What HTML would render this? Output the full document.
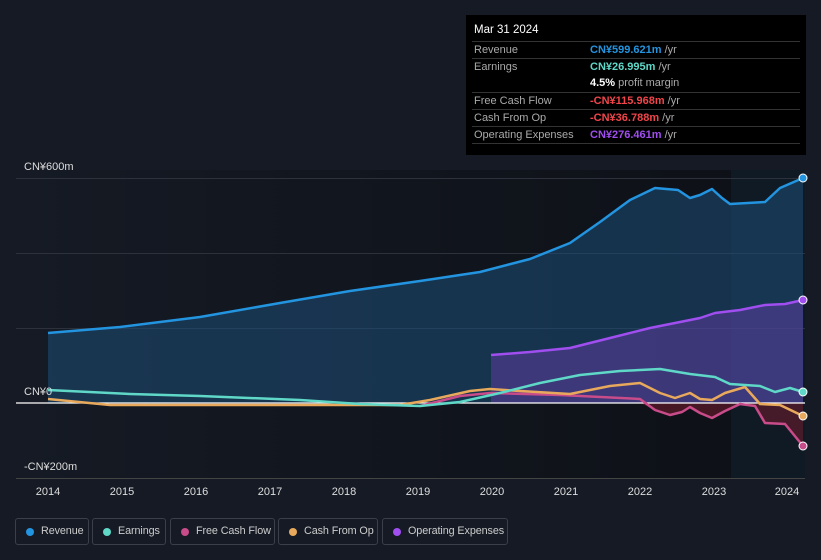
<!DOCTYPE html>
<html style="height:560px;overflow:hidden"><head><style>
body{margin:0;width:821px;height:560px;background:#151a24;font-family:"Liberation Sans",sans-serif;overflow:hidden;position:relative}
.tip{position:absolute;left:466px;top:15px;width:340px;height:140px;background:#000;color:#aaa;font-size:11px}
.tip .h{position:absolute;left:8px;top:9px;color:#fff;font-size:11.5px}
.row{position:absolute;left:6px;width:328px;border-top:1px solid #333;height:16px;white-space:nowrap}
.row span{position:absolute;top:2px}
.row .l{left:2px}.row .v{left:118px}
.leg{position:absolute;top:518px;height:27px;border:1px solid #3a3f4a;border-radius:3px;color:#ccc;font-size:10.8px;letter-spacing:-0.1px;line-height:25px;box-sizing:border-box;white-space:nowrap}
.leg i{position:absolute;left:10px;top:9px;width:8px;height:8px;border-radius:50%}
.leg b{font-weight:normal;position:absolute;left:25px;top:0}
</style></head><body>
<svg width="821" height="560" style="position:absolute;left:0;top:0">
<defs><linearGradient id="bg" x1="0" x2="1"><stop offset="0" stop-color="#151a24"/><stop offset="1" stop-color="#0d1016"/></linearGradient></defs>
<rect x="16" y="170" width="789" height="308" fill="url(#bg)"/>
<rect x="731" y="170" width="74" height="308" fill="#0f1a24"/>
<g stroke="#2c313b" stroke-width="1"><line x1="16" y1="178.5" x2="805" y2="178.5"/><line x1="16" y1="253.5" x2="805" y2="253.5"/><line x1="16" y1="328.5" x2="805" y2="328.5"/><line x1="16" y1="478.5" x2="805" y2="478.5" stroke="#444"/></g>
<path d="M48,333 L120,327 L200,317 L280,303 L350,291 L420,281 L480,272 L530,259 L570,243 L600,222 L630,200 L655,188 L678,190 L690,198 L700,195 L712,189 L722,198 L730,204 L765,202 L780,188 L803,178 L803,403 L48,403Z" fill="#1e4f78" fill-opacity="0.55"/>
<path d="M491,355 L530,352 L570,348 L610,338 L650,328 L680,322 L700,318 L715,313 L740,310 L765,305 L785,304 L803,300 L803,403 L491,403Z" fill="#6a3fb0" fill-opacity="0.45"/>
<path d="M640,403 L655,410 L670,415 L682,412 L690,407 L700,413 L712,418 L725,411 L740,404 L755,406 L765,423 L785,424 L803,446 L803,403Z" fill="#6a1d2d" fill-opacity="0.6"/>
<line x1="16" y1="403" x2="805" y2="403" stroke="#fff" stroke-width="1.2"/>
<g fill="none" stroke-width="2.5" stroke-linejoin="round">
<path d="M48,333 L120,327 L200,317 L280,303 L350,291 L420,281 L480,272 L530,259 L570,243 L600,222 L630,200 L655,188 L678,190 L690,198 L700,195 L712,189 L722,198 L730,204 L765,202 L780,188 L803,178" stroke="#2394e0"/>
<path d="M491,355 L530,352 L570,348 L610,338 L650,328 L680,322 L700,318 L715,313 L740,310 L765,305 L785,304 L803,300" stroke="#a04ef0"/>
<path d="M420,406 L460,396 L490,393 L560,395 L640,399 L655,410 L670,415 L682,412 L690,407 L700,413 L712,418 L725,411 L740,404 L755,406 L765,423 L785,424 L803,446" stroke="#c84b8a"/>
<path d="M48,399 L110,405 L400,405 L430,400 L470,391 L490,389 L520,391 L570,394 L610,386 L640,383 L660,393 L675,398 L690,393 L700,399 L712,400 L725,393 L745,387 L760,404 L780,405 L803,416" stroke="#e8a95c"/>
<path d="M48,390 L130,394 L200,396 L300,400 L360,404 L420,406 L460,402 L500,393 L540,383 L580,375 L620,371 L660,369 L690,374 L715,377 L730,384 L760,386 L775,392 L790,388 L803,392" stroke="#5fd8c8"/>
</g>
<g stroke="#fff" stroke-width="1"><circle cx="803" cy="178" r="4" fill="#2394e0"/><circle cx="803" cy="300" r="4" fill="#a04ef0"/><circle cx="803" cy="392" r="4" fill="#5fd8c8"/><circle cx="803" cy="416" r="4" fill="#e8a95c"/><circle cx="803" cy="446" r="4" fill="#c84b8a"/></g>
<g fill="#ddd" font-size="11" font-family="Liberation Sans"><text x="24" y="170">CN¥600m</text><text x="24" y="395">CN¥0</text><text x="24" y="470">-CN¥200m</text></g>
<g fill="#ddd" font-size="11" font-family="Liberation Sans" text-anchor="middle"><text x="48" y="495">2014</text><text x="122" y="495">2015</text><text x="196" y="495">2016</text><text x="270" y="495">2017</text><text x="344" y="495">2018</text><text x="418" y="495">2019</text><text x="492" y="495">2020</text><text x="566" y="495">2021</text><text x="640" y="495">2022</text><text x="714" y="495">2023</text><text x="787" y="495">2024</text></g>
</svg>
<div class="tip"><div class="h">Mar 31 2024</div>
<div class="row" style="top:26px"><span class="l">Revenue</span><span class="v"><b style="color:#2394e0">CN¥599.621m</b> /yr</span></div>
<div class="row" style="top:43px"><span class="l">Earnings</span><span class="v"><b style="color:#5fd8c8">CN¥26.995m</b> /yr</span></div>
<div class="row" style="top:60px;border:0"><span class="v"><b style="color:#fff">4.5%</b> profit margin</span></div>
<div class="row" style="top:77px"><span class="l">Free Cash Flow</span><span class="v"><b style="color:#f0454a">-CN¥115.968m</b> /yr</span></div>
<div class="row" style="top:94px"><span class="l">Cash From Op</span><span class="v"><b style="color:#f0454a">-CN¥36.788m</b> /yr</span></div>
<div class="row" style="top:111px"><span class="l">Operating Expenses</span><span class="v"><b style="color:#a04ef0">CN¥276.461m</b> /yr</span></div>
<div class="row" style="top:128px"></div>
</div>
<div class="leg" style="left:15px;width:74px"><i style="background:#2394e0"></i><b>Revenue</b></div>
<div class="leg" style="left:92px;width:74px"><i style="background:#5fd8c8"></i><b>Earnings</b></div>
<div class="leg" style="left:170px;width:105px"><i style="background:#c84b8a"></i><b>Free Cash Flow</b></div>
<div class="leg" style="left:278px;width:100px"><i style="background:#e8a95c"></i><b>Cash From Op</b></div>
<div class="leg" style="left:382px;width:126px"><i style="background:#a04ef0"></i><b>Operating Expenses</b></div>
</body></html>
